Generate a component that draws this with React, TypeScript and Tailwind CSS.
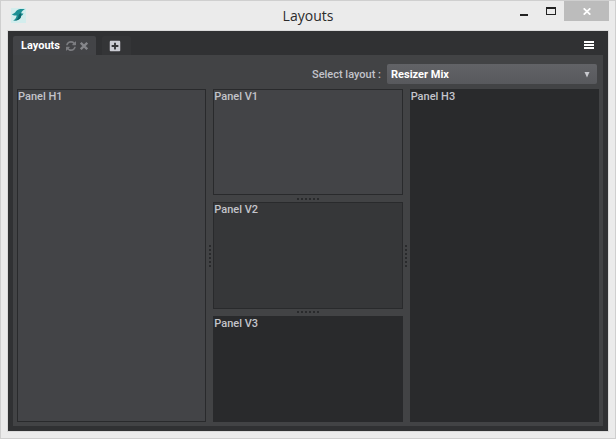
import clsx from "clsx";
import { useState } from "react";
import { FaPlusSquare } from "react-icons/fa";

const LAYOUTS = ["Resizer Mix", "Resizer Horizontal", "Resizer Vertical"];

function AppLogo() {
  return (
    <svg viewBox="0 0 15 15" className="size-[15px]" aria-hidden="true">
      <rect width="15" height="15" fill="#d3eded" />
      <path
        d="M14 1.300C10 .8 6.500 1.200 5 3.300C4.200 4.800 3 5.800 .8 6.200C2 7.400 3.500 7.800 5.700 7.500C5.500 9.300 4.500 11 2.200 12.700C6.800 13 10 11 10.200 7.800C11.300 7.400 12 6.700 12.400 5.200C11.600 5.500 10.900 5.500 10.200 5.200C10.600 3.500 11.800 2.300 14 1.300Z"
        fill="#1c9094"
      />
      <path d="M10.200 5.200C9 5 8 6 7.500 7.500C7.500 9.800 6.300 11.800 3.600 12.700C7.200 12.500 10 11 10.200 7.800Z" fill="#0d666c" />
    </svg>
  );
}

function RefreshIcon() {
  return (
    <svg viewBox="0 0 1536 1536" className="size-2.5" fill="currentColor" aria-hidden="true">
      <path d="M1511 928q0 5-1 7-64 268-268 434.500t-478 166.500q-146 0-282.500-55t-243.500-157l-129 129q-19 19-45 19t-45-19-19-45v-448q0-26 19-45t45-19h448q26 0 45 19t19 45-19 45l-137 137q71 66 161 102t187 36q134 0 250-65t186-179q11-17 53-117 8-23 30-23h192q13 0 22.500 9.500t9.500 22.500zm25-800v448q0 26-19 45t-45 19h-448q-26 0-45-19t-19-45 19-45l138-138q-148-137-349-137-134 0-250 65t-186 179q-11 17-53 117-8 23-30 23h-199q-13 0-22.500-9.500t-9.500-22.500v-7q65-268 270-434.500t480-166.500q146 0 284 55.500t245 156.500l130-129q19-19 45-19t45 19 19 45z" />
    </svg>
  );
}

function TitleBar() {
  return (
    <header className="relative flex h-[29px] shrink-0 items-start justify-between">
      <div className="pt-[7px] pl-2.5">
        <AppLogo />
      </div>
      <h1 className="absolute inset-x-0 top-0.5 text-center font-['Open_Sans',sans-serif] text-sm leading-[26px] text-[#2b2b2b]">
        Layouts
      </h1>
      <div className="relative mr-1.5 flex h-5">
        <button type="button" aria-label="Minimize" className="flex w-7 items-end justify-center pb-[5px]">
          <span className="h-0.5 w-2 bg-[#222]" />
        </button>
        <button type="button" aria-label="Maximize" className="flex w-[26px] items-center justify-center">
          <span className="h-2 w-2.5 border border-t-2 border-[#222]" />
        </button>
        <button type="button" aria-label="Close" className="flex w-[45px] items-center justify-center bg-[#bcbcbc]">
          <svg viewBox="0 0 8 7" className="h-[7px] w-2" aria-hidden="true">
            <path d="M.7 .3L7.300 6.700M7.300 .3L.7 6.700" stroke="#fff" strokeWidth="1.700" />
          </svg>
        </button>
      </div>
    </header>
  );
}

function TabBar() {
  return (
    <nav className="flex h-6 shrink-0 items-end gap-1.5">
      <div className="flex h-[19px] items-center rounded-t-xs bg-[#434447] px-2">
        <span className="mr-1.5 pt-0.5 text-[11px] font-bold text-white">Layouts</span>
        <button type="button" aria-label="Refresh" className="mr-1 text-[#7c7d81]">
          <RefreshIcon />
        </button>
        <button type="button" aria-label="Close tab" className="text-[#85868a]">
          <svg viewBox="0 0 8 8" className="size-2" aria-hidden="true">
            <path d="M.8 .8L7.200 7.200M7.200 .8L.8 7.200" stroke="currentColor" strokeWidth="2.300" />
          </svg>
        </button>
      </div>
      <button
        type="button"
        aria-label="New tab"
        className="flex h-[19px] w-[29px] items-center justify-center rounded-t-xs bg-[#343537] pr-0.5 text-[#cbccd3]"
      >
        <FaPlusSquare className="size-3" />
      </button>
      <button type="button" aria-label="Menu" className="mr-[9px] mb-1.5 ml-auto">
        <svg viewBox="0 0 10 8" className="h-2 w-2.5" aria-hidden="true">
          <path d="M0 1H10M0 4H10M0 7H10" stroke="#fff" strokeWidth="1.800" />
        </svg>
      </button>
    </nav>
  );
}

function Panel({ title, className }: { title: string; className: string }) {
  return (
    <section className={clsx("min-h-0 min-w-0 border border-[#292a2c]", className)}>
      <h2 className="text-[11px] leading-[14px] font-medium text-[#c3c4cb]">{title}</h2>
    </section>
  );
}

// Six dot grip between two panels
function Resizer({ vertical = false }: { vertical?: boolean }) {
  return (
    <div
      role="separator"
      className={clsx(
        "flex items-center justify-center gap-0.5",
        vertical ? "cursor-col-resize flex-col" : "cursor-row-resize",
      )}
    >
      {[0, 1, 2, 3, 4, 5].map((dot) => (
        <span key={dot} className="size-0.5 bg-[#292a2c]" />
      ))}
    </div>
  );
}

function LayoutSelect() {
  const [layout, setLayout] = useState(LAYOUTS[0]);

  return (
    <div className="mr-0.5 mb-[5px] flex h-5 shrink-0 items-center justify-end gap-1.5">
      <label htmlFor="layout" className="pt-0.5 text-[11px] font-medium text-[#c3c4cb]">
        Select layout :
      </label>
      <div className="relative w-[210px]">
        <select
          id="layout"
          value={layout}
          onChange={(e) => setLayout(e.target.value)}
          className="block h-5 w-full appearance-none rounded-xs bg-linear-to-b from-[#626367] to-[#58595d] px-1 pt-0.5 text-[11px] font-bold text-white"
        >
          {LAYOUTS.map((name) => (
            <option key={name}>{name}</option>
          ))}
        </select>
        <svg viewBox="0 0 6 6" className="pointer-events-none absolute top-2 right-[7px] size-1.5" aria-hidden="true">
          <path d="M.5 0H5.500L3 5.500Z" fill="#c9cacf" />
        </svg>
      </div>
    </div>
  );
}

export default function App() {
  return (
    <div className="flex h-screen flex-col border border-[#cfcfcf] bg-[#ebebeb] font-[Roboto,sans-serif]">
      <TitleBar />
      <div className="mx-1.5 mb-1.5 flex min-h-0 flex-1 flex-col border border-[#dadada] bg-[#303133] px-[5px] pb-[5px]">
        <TabBar />
        <main className="flex min-h-0 flex-1 flex-col bg-[#424345] px-1 pt-[9px] pb-1">
          <LayoutSelect />
          <div className="grid min-h-0 flex-1 grid-cols-[1fr_7px_1fr_7px_1fr]">
            <Panel title="Panel H1" className="bg-[#434447]" />
            <Resizer vertical />
            <div className="grid min-h-0 grid-rows-[1fr_7px_1fr_7px_1fr]">
              <Panel title="Panel V1" className="bg-[#434447]" />
              <Resizer />
              <Panel title="Panel V2" className="bg-[#363739]" />
              <Resizer />
              <Panel title="Panel V3" className="bg-[#292a2c]" />
            </div>
            <Resizer vertical />
            <Panel title="Panel H3" className="bg-[#292a2c]" />
          </div>
        </main>
      </div>
    </div>
  );
}
